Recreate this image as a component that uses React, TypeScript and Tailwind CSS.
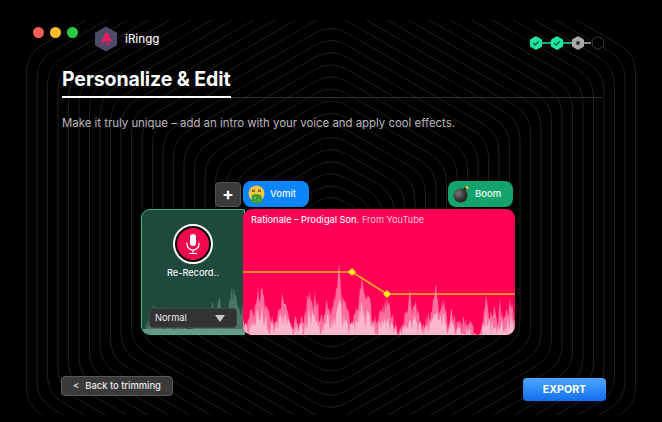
import React from "react";

const font = { fontFamily: "Inter, 'Liberation Sans', sans-serif" };

function hexPath(cx: number, cy: number, a: number, r: number) {
  const R = a / Math.cos(Math.PI / 6);
  const pts = [0, 1, 2, 3, 4, 5].map((i) => {
    const t = -Math.PI / 2 + (i * Math.PI) / 3;
    return [cx + R * Math.cos(t), cy + R * Math.sin(t)];
  });
  const rr = Math.min(r, a * 0.5);
  let d = "";
  pts.forEach((p, i) => {
    const prev = pts[(i + 5) % 6];
    const next = pts[(i + 1) % 6];
    const len = R;
    const s = [p[0] + ((prev[0] - p[0]) * rr) / len, p[1] + ((prev[1] - p[1]) * rr) / len];
    const e = [p[0] + ((next[0] - p[0]) * rr) / len, p[1] + ((next[1] - p[1]) * rr) / len];
    d += `${i === 0 ? "M" : "L"}${s[0].toFixed(1)} ${s[1].toFixed(1)}Q${p[0].toFixed(1)} ${p[1].toFixed(1)} ${e[0].toFixed(1)} ${e[1].toFixed(1)}`;
  });
  return d + "Z";
}

function Background() {
  const lines = [];
  for (let n = 2; n <= 29; n++) {
    lines.push(<path key={n} d={hexPath(331, 230, n * 10.5, 18)} fill="none" stroke="#1e1e1e" strokeWidth="1" />);
  }
  return (
    <svg className="absolute inset-0" width="662" height="422">
      <defs>
        <clipPath id="bgclip">
          <rect x="24" y="20" width="614" height="395" />
        </clipPath>
      </defs>
      <g clipPath="url(#bgclip)">{lines}</g>
    </svg>
  );
}

function rng(seed: number) {
  let s = seed;
  return () => {
    s = (s * 16807) % 2147483647;
    return s / 2147483647;
  };
}

function buildWave(anchors: number[][], x0: number, x1: number, seed: number, jitter: number, bottom: number) {
  const rand = rng(seed);
  const pts: string[] = [`${x0},${bottom}`];
  let k = 0;
  for (let x = x0; x <= x1; x += 1) {
    while (k < anchors.length - 2 && anchors[k + 1][0] < x) k++;
    const [ax, ay] = anchors[k];
    const [bx, by] = anchors[k + 1];
    const t = Math.max(0, Math.min(1, (x - ax) / (bx - ax)));
    const y = ay + (by - ay) * t + Math.pow(rand(), 1.2) * jitter - jitter * 0.15;
    pts.push(`${x},${Math.min(bottom, y).toFixed(1)}`);
  }
  pts.push(`${x1},${bottom}`);
  return pts.join(" ");
}

const topAnchors = [
  [244, 318], [250, 312], [254, 304], [258, 282], [260, 300], [262, 276], [265, 302], [270, 312], [275, 318],
  [280, 305], [283, 288], [286, 306], [292, 316], [298, 320], [304, 312], [310, 287], [313, 300], [315, 288],
  [319, 308], [323, 312], [327, 298], [331, 312], [336, 290], [339, 262], [342, 292], [347, 310], [352, 318],
  [358, 300], [362, 270], [365, 296], [368, 285], [372, 312], [378, 316], [382, 308], [387, 295], [391, 310],
  [394, 320], [400, 328], [404, 318], [408, 300], [410, 290], [413, 308], [416, 302], [420, 318], [426, 316],
  [432, 308], [436, 279], [439, 302], [444, 300], [448, 320], [452, 305], [456, 322], [464, 318], [470, 322],
  [476, 328], [480, 333], [483, 312], [486, 296], [490, 312], [494, 306], [498, 316], [500, 300], [504, 318],
  [508, 306], [512, 295], [514, 312],
];
const lowAnchors = topAnchors.map(([x, y]) => [x, y + (334 - y) * 0.45]);

const greenAnchors = [
  [142, 324], [150, 320], [156, 296], [162, 318], [170, 300], [176, 322], [186, 318], [192, 322], [198, 308],
  [205, 320], [212, 300], [218, 292], [224, 316], [230, 296], [235, 280], [240, 300], [245, 296],
];

function Hex({ cx, cy, r, fill, stroke }: { cx: number; cy: number; r: number; fill: string; stroke?: string }) {
  return (
    <path
      d={hexPath(cx, cy, r * Math.cos(Math.PI / 6), 1)}
      fill={fill}
      stroke={stroke || "none"}
      strokeWidth={stroke ? 1 : 0}
    />
  );
}

function Steps() {
  return (
    <svg width="78" height="16" viewBox="0 0 78 16" className="block">
      <path d="M7 8H49" stroke="#1fe3a3" strokeWidth="1.5" />
      <path d="M49 8H62" stroke="#b5b5b5" strokeWidth="1.5" />
      <Hex cx={7} cy={8} r={7} fill="#1fe3a3" />
      <path d="M4.2 8l2 2 3.6-3.8" stroke="#063" strokeWidth="1.5" fill="none" />
      <Hex cx={28} cy={8} r={7} fill="#1fe3a3" />
      <path d="M25.2 8l2 2 3.6-3.8" stroke="#063" strokeWidth="1.5" fill="none" />
      <Hex cx={49} cy={8} r={7} fill="#a8a8a8" />
      <circle cx="49" cy="8" r="2" fill="#333" />
      <Hex cx={69} cy={8} r={6.5} fill="#000" stroke="#3a3a3a" />
    </svg>
  );
}

function Logo() {
  return (
    <svg width="24" height="26" viewBox="0 0 24 26" className="block">
      <path d="M12 0.5L23 6.7V19.3L12 25.5L1 19.3V6.7Z" fill="#4d4b68" />
      <path d="M11.500 6.500l3 .6 1 4.400 3 3-2 1.200-3.500-.4-3.800 1.400-2.200-.8 2.300-3.400z" fill="#ee1d5e" />
      <path d="M8 17.500l-2 1.200 2.800.2z" fill="#ee1d5e" />
      <circle cx="14" cy="18" r="1.200" fill="#ee1d5e" />
    </svg>
  );
}

function VomitEmoji() {
  return (
    <svg width="17" height="19" viewBox="0 0 17 19" className="block">
      <circle cx="8.5" cy="8.5" r="8" fill="#f6c945" />
      <path d="M4 4.5l3 2.5M4 7l3-2.5M10 4.5l3 2.5M10 7l3-2.5" stroke="#6b3d12" strokeWidth="1" />
      <path d="M4 10c2 -1 7-1 9 0l1.5 6c.3 2-2 2.5-3 2-1 .8-4 .8-5 0-1 .5-3.300 0-3-2z" fill="#3f9b36" />
      <circle cx="7" cy="13" r="1" fill="#7cc84f" />
      <circle cx="11" cy="15" r="1" fill="#7cc84f" />
    </svg>
  );
}

function BombEmoji() {
  return (
    <svg width="17" height="18" viewBox="0 0 17 18" className="block">
      <defs>
        <radialGradient id="bombg" cx="0.35" cy="0.35" r="0.8">
          <stop offset="0" stopColor="#777" />
          <stop offset="0.6" stopColor="#333" />
          <stop offset="1" stopColor="#151515" />
        </radialGradient>
      </defs>
      <circle cx="7.500" cy="10.500" r="7" fill="url(#bombg)" />
      <path d="M11 5l2-2" stroke="#222" strokeWidth="2.500" />
      <circle cx="14" cy="2.500" r="1.600" fill="#f7a51c" />
      <circle cx="14" cy="2.500" r="0.700" fill="#ffe680" />
    </svg>
  );
}

function PinkWave() {
  return (
    <svg className="absolute left-0 top-0" width="272" height="126" viewBox="243 209 272 126">
      <polygon points={buildWave(topAnchors, 243, 515, 4711, 16, 335)} fill="#ff6d9f" />
      <polygon points={buildWave(lowAnchors, 243, 515, 977, 18, 335)} fill="#fbb6d0" />
      <polyline points="243,272 352,272 387,294 515,294" fill="none" stroke="#f7b21a" strokeWidth="1.500" />
      <path d="M352 268l4 4-4 4-4-4z" fill="#ffe81a" />
      <path d="M387 290l4 4-4 4-4-4z" fill="#ffe81a" />
    </svg>
  );
}

function GreenWave() {
  return (
    <svg className="absolute left-0 top-0" width="104" height="126" viewBox="141 209 104 126">
      <polygon points={buildWave(greenAnchors, 141, 245, 3307, 24, 335)} fill="#4a7566" />
      <rect x="141" y="329" width="104" height="6" fill="#6a9786" />
    </svg>
  );
}

export default function App() {
  return (
    <div className="relative w-[662px] h-[422px] overflow-hidden bg-black text-white" style={font}>
      <Background />
      <div className="relative flex flex-col h-full">
        <div className="flex items-start h-[52px] pt-[27px] pl-[33px] pr-[55px]">
          <div className="flex gap-[6px]">
            <span className="block w-[11px] h-[11px] rounded-full bg-[#fb5f57]" />
            <span className="block w-[11px] h-[11px] rounded-full bg-[#fcbd2e]" />
            <span className="block w-[11px] h-[11px] rounded-full bg-[#28ca41]" />
          </div>
          <div className="ml-[16px] -mt-[1px]">
            <Logo />
          </div>
          <div className="ml-[7px] mt-[3px] text-[11.5px] leading-[18px] font-medium text-[#eeeeee]">iRingg</div>
          <div className="ml-auto mt-[8px]">
            <Steps />
          </div>
        </div>

        <div className="ml-[62px] mr-[60px] h-[46px] border-b border-[#333333]">
          <div className="w-[169px] h-[46px] border-b-2 border-white pt-[15px]">
            <div className="text-[19.5px] leading-[24px] font-bold whitespace-nowrap tracking-[-0.1px]">Personalize &amp; Edit</div>
          </div>
        </div>

        <div className="ml-[62px] mt-[16px] text-[11.4px] leading-[18px] text-[#b9b9b9] whitespace-nowrap">
          Make it truly unique – add an intro with your voice and apply cool effects.
        </div>

        <div className="ml-[141px] mt-[49px] w-[374px]">
          <div className="flex items-start h-[28px]">
            <div className="ml-[74px] mt-[1px] w-[26px] h-[25px] rounded-[4px] bg-[#3a3a3a] border border-[#555555] flex items-center justify-center">
              <span className="block text-[17px] leading-[17px] font-bold text-white">+</span>
            </div>
            <div className="ml-[2px] w-[66px] h-[26px] rounded-[8px] bg-[#0a84ff] flex items-center pl-[5px] gap-[5px]">
              <VomitEmoji />
              <span className="text-[9.5px] font-medium text-[#f2f8ff]">Vomit</span>
            </div>
            <div className="ml-[139px] w-[65px] h-[26px] rounded-[8px] bg-[#14a36c] flex items-center pl-[5px] gap-[5px]">
              <BombEmoji />
              <span className="text-[9.5px] font-medium text-[#eefcf5]">Boom</span>
            </div>
          </div>

          <div className="flex h-[126px]">
            <div className="relative w-[104px] h-[126px] rounded-l-[9px] border border-[#3ab58a] bg-[#1e4a3d] overflow-hidden flex flex-col items-center shrink-0">
              <div className="absolute -left-px -top-px">
                <GreenWave />
              </div>
              <div className="relative mt-[14px] w-[40px] h-[40px] rounded-full border-2 border-white bg-black p-[2px]">
                <div className="w-full h-full rounded-full bg-[#f2074f] flex items-center justify-center">
                  <svg width="16" height="22" viewBox="0 0 16 22" fill="none">
                    <rect x="5" y="1" width="6" height="12" rx="3" fill="#ffffff" />
                    <path d="M2 10v1a6 6 0 0 0 12 0v-1M8 17v3M4.500 20.500h7" stroke="#ffffff" strokeWidth="1.200" strokeLinecap="round" />
                  </svg>
                </div>
              </div>
              <div className="relative mt-[2px] text-[9.2px] leading-[14px] font-medium text-[#f4f4f4] whitespace-nowrap">Re-Record..</div>
              <div className="relative self-start ml-[7px] mt-[28px] w-[88px] h-[20px] rounded-[4px] bg-[#333333] border border-[#444444] flex items-center justify-between pl-[5px] pr-[11px]">
                <span className="text-[9.3px] text-[#eeeeee]">Normal</span>
                <span className="block w-0 h-0 border-l-[5px] border-r-[5px] border-t-[7px] border-l-transparent border-r-transparent border-t-[#c8c8c8]" />
              </div>
            </div>
            <div className="relative -ml-[2px] w-[272px] h-[126px] rounded-[9px] bg-[#ff0055] overflow-hidden">
              <PinkWave />
              <div className="relative pl-[8px] pt-[4px] text-[9.2px] leading-[14px] whitespace-nowrap">
                <span className="font-medium text-[#fdeef3]">Rationale – Prodigal Son.</span>
                <span className="text-[#ffc0d5]"> From YouTube</span>
              </div>
            </div>
          </div>
        </div>

        <div className="flex items-start ml-[61px] mr-[56px] mt-[41px]">
          <div className="w-[112px] h-[20px] rounded-[4px] bg-[#3a3a3a] border border-[#575757] flex items-center pl-[11px] gap-[6px] text-[9.4px] font-medium text-[#e8e8e8] whitespace-nowrap">
            <span>&lt;</span>
            <span>Back to trimming</span>
          </div>
          <div className="ml-auto mt-[2px] w-[83px] h-[23px] rounded-[4px] bg-gradient-to-b from-[#4ba5ff] to-[#0f6ff0] flex items-center justify-center text-[10.6px] font-bold text-white">
            EXPORT
          </div>
        </div>
      </div>
    </div>
  );
}
